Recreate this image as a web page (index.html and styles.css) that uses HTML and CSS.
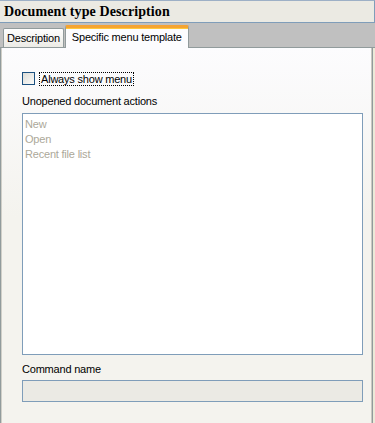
FILE: index.html
```html
<!DOCTYPE html>
<html lang="en">
<head>
    <meta charset="UTF-8">
    <meta name="viewport" content="width=device-width, initial-scale=1.0">
    <title>Document type Description</title>
    <link rel="stylesheet" href="styles.css">
</head>
<body>
    <div class="header">Document type Description</div>
    <div class="tabbar">
        <div class="tab">Description</div>
        <div class="tab active">Specific menu template</div>
    </div>
    <div class="panel">
        <label class="check-row">
            <span class="checkbox"></span>
            <span class="check-label">Always show menu</span>
        </label>

        <div class="field-label">Unopened document actions</div>
        <ul class="listbox">
            <li>New</li>
            <li>Open</li>
            <li>Recent file list</li>
        </ul>

        <div class="field-label command-label">Command name</div>
        <div class="textbox"></div>
    </div>
</body>
</html>
```

FILE: styles.css
```css
* {
    margin: 0;
    padding: 0;
    box-sizing: border-box;
}

body {
    width: 375px;
    height: 423px;
    overflow: hidden;
    font-family: "Liberation Sans", Arial, sans-serif;
    font-size: 11px;
    letter-spacing: -0.2px;
    color: #000;
    background-color: #ece9d8;
}

.header {
    height: 23px;
    padding: 2px 0 0 4px;
    border-top: 1px solid #9db0c6;
    border-bottom: 1px solid #7f9db9;
    border-right: 1px solid #7f9db9;
    background-color: #ebeae3;
    font-family: "Liberation Serif", "Times New Roman", serif;
    font-weight: bold;
    font-size: 14px;
    letter-spacing: 0.1px;
    line-height: 18px;
}

.tabbar {
    display: flex;
    align-items: flex-end;
    height: 25px;
    padding-left: 3px;
    background-color: #c0c0c0;
    border-bottom: 1px solid #919b9c;
}

.tab {
    height: 19px;
    padding: 0 3px;
    line-height: 18px;
    border: 1px solid #919b9c;
    border-bottom: none;
    border-radius: 2px 2px 0 0;
    background: linear-gradient(#fefefe, #ecebe6);
}

.tab.active {
    height: 23px;
    margin-left: 1px;
    margin-bottom: -1px;
    padding: 0 6px;
    line-height: 19px;
    border-top: 3px solid #f5a433;
    background: #fcfcfe;
    box-shadow: inset 0 1px 0 #ffc83c;
}

.panel {
    width: 373px;
    height: 375px;
    padding: 24px 9px 0 21px;
    border-left: 1px solid #919b9c;
    border-right: 1px solid #919b9c;
    box-shadow: inset 1px 0 0 #d0cfc8, inset -1px 0 0 #c9c8c0;
    background: linear-gradient(#fcfcfe, #f4f3ee 45%, #f4f3ee);
}

.check-row {
    display: flex;
    align-items: center;
    height: 13px;
}

.checkbox {
    width: 13px;
    height: 13px;
    border: 1px solid #1c5180;
    background: linear-gradient(135deg, #dcdcd7, #fbfbf9);
}

.check-label {
    margin-left: 4px;
    padding: 0 1px;
    line-height: 12px;
    border: 1px dotted #000;
}

.field-label {
    margin-top: 10px;
    line-height: 13px;
}

.listbox {
    list-style: none;
    height: 242px;
    margin-top: 5px;
    padding: 3px 2px;
    border: 1px solid #7f9db9;
    background-color: #fff;
    color: #aca899;
    line-height: 15px;
}

.command-label {
    margin-top: 8px;
}

.textbox {
    height: 22px;
    margin-top: 4px;
    border: 1px solid #7f9db9;
    background-color: #ebeae4;
}
```
